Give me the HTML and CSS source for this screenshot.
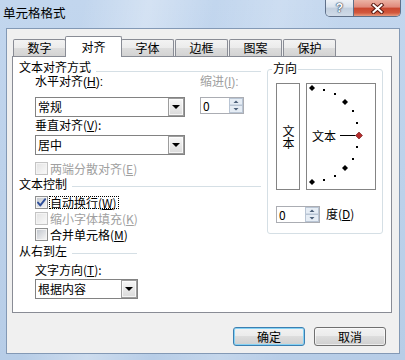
FILE: index.html
```html
<!DOCTYPE html>
<html lang="zh-CN">
<head>
<meta charset="utf-8">
<title>单元格格式</title>
<link rel="stylesheet" href="styles.css">
</head>
<body>
<div class="window">
  <div class="titlebar">
    <div class="title">单元格格式</div>
    <div class="caps">
      <div class="cap help">?</div>
      <div class="cap close">
        <svg width="15" height="11" viewBox="0 0 15 11"><path class="x-out" d="M3.5 2 L11.5 9 M11.5 2 L3.5 9"/><path class="x-in" d="M3.5 2 L11.5 9 M11.5 2 L3.5 9"/></svg>
      </div>
    </div>
  </div>
  <div class="client">
    <div class="tabs">
      <div class="tab">数字</div>
      <div class="tab active">对齐</div>
      <div class="tab">字体</div>
      <div class="tab">边框</div>
      <div class="tab">图案</div>
      <div class="tab">保护</div>
    </div>
    <div class="panel">
      <div class="left">
        <div class="gtitle tight first"><span>文本对齐方式</span><i class="rule"></i></div>
        <div class="label tight r0"><span class="lab-a">水平对齐(<u>H</u>):</span><span class="dis">缩进(<u>I</u>):</span></div>
        <div class="fieldrow r1">
          <div class="combo wide"><span class="val">常规</span><span class="drop"><i class="tri"></i></span></div>
          <div class="spin indent">
            <span class="val">0</span>
            <svg width="14" height="15" viewBox="0 0 14 15"><rect x=".5" y=".5" width="13" height="6.5" class="sb"/><rect x=".5" y="7.5" width="13" height="7" class="sb"/><path d="M4.5 5 L7 2.5 L9.5 5 Z" class="sa"/><path d="M4.5 10 L7 12.5 L9.5 10 Z" class="sa"/></svg>
          </div>
        </div>
        <div class="label r2">垂直对齐(<u>V</u>):</div>
        <div class="fieldrow r3">
          <div class="combo wide"><span class="val">居中</span><span class="drop"><i class="tri"></i></span></div>
        </div>
        <div class="check disabled r4"><span class="box"></span><span class="txt">两端分散对齐(<u>E</u>)</span></div>
        <div class="gtitle r5"><span>文本控制</span><i class="rule"></i></div>
        <div class="check r6"><span class="box checked"><svg width="11" height="11" viewBox="0 0 11 11"><path d="M2 5.6 L4.3 8.4 L9.2 2.2" class="tick"/></svg></span><span class="txt focus">自动换行(<u>W</u>)</span></div>
        <div class="check disabled r7"><span class="box"></span><span class="txt">缩小字体填充(<u>K</u>)</span></div>
        <div class="check r7"><span class="box"></span><span class="txt">合并单元格(<u>M</u>)</span></div>
        <div class="gtitle r8"><span>从右到左</span><i class="rule short"></i></div>
        <div class="label r9">文字方向(<u>T</u>):</div>
        <div class="fieldrow r10">
          <div class="combo narrow"><span class="val">根据内容</span><span class="drop"><i class="tri"></i></span></div>
        </div>
      </div>
      <div class="orient">
        <div class="otitle">方向</div>
        <div class="obody">
          <div class="vbox"><span class="vtext">文本</span></div>
          <div class="dial">
            <svg width="68" height="105" viewBox="0 0 68 105">
              <g fill="#000">
                <polygon points="5,1 8,4 5,7 2,4"/>
                <polygon points="38,15 41,18 38,21 35,18"/>
                <polygon points="38,81 41,84 38,87 35,84"/>
                <polygon points="5,95 8,98 5,101 2,98"/>
                <rect x="16" y="5" width="2" height="2"/>
                <rect x="27" y="9" width="2" height="2"/>
                <rect x="45" y="26" width="2" height="2"/>
                <rect x="49" y="38" width="2" height="2"/>
                <rect x="49" y="62" width="2" height="2"/>
                <rect x="45" y="74" width="2" height="2"/>
                <rect x="27" y="91" width="2" height="2"/>
                <rect x="16" y="95" width="2" height="2"/>
              </g>
              <line x1="33" y1="51.5" x2="48.5" y2="51.5" stroke="#000" stroke-width="1"/>
              <polygon points="52,48 55.5,51.5 52,55 48.5,51.5" fill="#b42c2c" stroke="#6a1414" stroke-width=".6"/>
              <text x="5" y="56.5" class="dtext">文本</text>
            </svg>
          </div>
        </div>
        <div class="deg">
          <div class="spin">
            <span class="val">0</span>
            <svg width="14" height="15" viewBox="0 0 14 15"><rect x=".5" y=".5" width="13" height="6.5" class="sb"/><rect x=".5" y="7.5" width="13" height="7" class="sb"/><path d="M4.5 5 L7 2.5 L9.5 5 Z" class="sa"/><path d="M4.5 10 L7 12.5 L9.5 10 Z" class="sa"/></svg>
          </div>
          <span class="unit">度(<u>D</u>)</span>
        </div>
      </div>
    </div>
    <div class="buttons">
      <button class="btn default">确定</button>
      <button class="btn">取消</button>
    </div>
  </div>
</div>
</body>
</html>
```

FILE: styles.css
```css
* { box-sizing: border-box; }
html, body { margin: 0; padding: 0; }
body {
  width: 405px;
  height: 360px;
  overflow: hidden;
  font-family: "Noto Sans CJK SC", "Liberation Sans", sans-serif;
  font-size: 12px;
  color: #000;
}
u { text-decoration: underline; text-underline-offset: 1px; }

.window {
  width: 405px;
  height: 360px;
  display: flex;
  flex-direction: column;
  background:
    linear-gradient(100deg, rgba(255,255,255,0) 18%, rgba(255,255,255,.3) 32%, rgba(255,255,255,0) 46%, rgba(255,255,255,.18) 60%, rgba(255,255,255,0) 74%),
    linear-gradient(180deg, #c2d6ee 0%, #b7cde7 100%);
}

/* title bar */
.titlebar {
  height: 28px;
  flex: none;
  display: flex;
  align-items: flex-start;
  padding: 0 4px 0 3px;
}
.title { margin-top: 6px; font-size: 12.5px; line-height: 14px; }
.caps {
  margin-left: auto;
  display: flex;
  height: 17px;
  border: 1px solid #5f7089;
  border-top: none;
  border-radius: 0 0 5px 5px;
  overflow: hidden;
}
.cap { height: 100%; display: flex; align-items: center; justify-content: center; }
.help {
  width: 28px;
  border-right: 1px solid #5f7089;
  background: linear-gradient(#eef2f7 0%, #d9e2ed 45%, #c2cfde 50%, #d0dbe8 100%);
  font-family: "Liberation Sans", sans-serif;
  font-weight: bold;
  font-size: 12px;
  line-height: 12px;
  color: #fff;
  text-shadow: 0 0 1px #33455c, 0 0 1px #33455c, 0 0 2px #33455c;
}
.close {
  width: 46px;
  background: linear-gradient(#ebb3a5 0%, #e0897a 45%, #c9472f 50%, #d2583d 80%, #e79c80 100%);
}
.close svg { display: block; }
.x-out { fill: none; stroke: #5a1a12; stroke-width: 4; stroke-linecap: square; }
.x-in { fill: none; stroke: #fff; stroke-width: 2; stroke-linecap: square; }

/* client */
.client {
  flex: 1;
  margin: 0 5px 6px 6px;
  background: #f0f0f0;
  border: 1px solid #8399b5;
  display: flex;
  flex-direction: column;
}
.tabs {
  flex: none;
  display: flex;
  align-items: flex-end;
  height: 20px;
  margin-top: 7px;
  padding-left: 6px;
}
.tab {
  width: 53px;
  height: 17px;
  margin-right: 1px;
  border: 1px solid #898c95;
  border-bottom: none;
  border-radius: 2px 2px 0 0;
  background: linear-gradient(#f3f3f3 0%, #ebebeb 50%, #dddddd 50%, #d3d3d3 100%);
  text-align: center;
  line-height: 16px;
}
.tab.active {
  width: 57px;
  height: 21px;
  margin: 0 -1px -1px -2px;
  padding-top: 2px;
  background: #fff;
  position: relative;
  z-index: 1;
}

.panel {
  flex: none;
  width: 380px;
  height: 257px;
  margin-left: 5px;
  border: 1px solid #898c95;
  background: #fff;
  display: flex;
}
.left {
  flex: none;
  width: 254px;
  padding: 5px 6px 0;
  display: flex;
  flex-direction: column;
}
.gtitle { display: flex; height: 12px; line-height: 12px; white-space: nowrap; }
.gtitle .rule { flex: 1; height: 1px; background: #d5dfe5; margin: 8px 0 0 5px; }
.gtitle.first .rule { margin-top: 9px; }
.gtitle .rule.short { flex: none; width: 65px; }
.label { display: flex; height: 12px; line-height: 12px; padding-left: 16px; white-space: nowrap; }
.tight { font-family: "Liberation Sans", "Noto Sans CJK SC", sans-serif; }
.lab-a { width: 165px; }
.dis { color: #a0a0a0; }

.fieldrow { display: flex; align-items: flex-start; padding-left: 16px; }
.r0 { margin-top: 2px; }
.r1 { margin-top: 9px; }
.r2 { margin-top: 2px; }
.r3 { margin-top: 4px; }
.r4 { margin-top: 7px; }
.r5 { margin-top: 3px; }
.r6 { margin-top: 6px; }
.r7 { margin-top: 3px; }
.r8 { margin-top: 4px; }
.r9 { margin-top: 7px; }
.r10 { margin-top: 3px; }

.combo { height: 20px; border: 1px solid #828282; background: #fff; display: flex; }
.combo.wide { width: 150px; }
.combo.narrow { width: 103px; }
.combo .val { flex: 1; line-height: 18px; padding-left: 2px; white-space: nowrap; }
.drop {
  width: 16px;
  border: 1px solid #9d9d9d;
  background: linear-gradient(#f7f7f7, #dadada);
  box-shadow: inset 0 0 0 1px rgba(255,255,255,.7);
  display: flex;
  align-items: center;
  justify-content: center;
}
.tri {
  width: 0;
  height: 0;
  border-left: 4px solid transparent;
  border-right: 4px solid transparent;
  border-top: 4px solid #000;
  margin-top: -1px;
}

.spin { width: 44px; height: 17px; border: 1px solid #abadb3; background: #fff; display: flex; flex: none; }
.spin.indent { margin-left: 15px; }
.spin .val { flex: 1; line-height: 15px; padding-left: 2px; }
.spin svg { display: block; }
.sb { fill: #e6edf5; stroke: #b9c5d4; stroke-width: 1; }
.sa { fill: #4d6079; }

.check { display: flex; align-items: center; height: 13px; padding-left: 16px; white-space: nowrap; }
.box {
  flex: none;
  width: 13px;
  height: 13px;
  border: 1px solid #8e8f8f;
  padding: 1px;
  background: #f4f4f4;
  position: relative;
}
.box::before {
  content: "";
  display: block;
  width: 100%;
  height: 100%;
  background: linear-gradient(135deg, #c3c8cf, #f4f4f4);
}
.box svg { position: absolute; left: 0; top: 0; }
.tick { fill: none; stroke: #2f4f9a; stroke-width: 1.9; stroke-linecap: round; stroke-linejoin: round; }
.check .txt { margin-left: 2px; line-height: 13px; }
.check .txt.focus { margin-left: 1px; border: 1px dotted #000; line-height: 11px; padding-right: 1px; }
.check.disabled { color: #a0a0a0; }
.check.disabled .box { border-color: #c4c4c4; }
.check.disabled .box::before { background: linear-gradient(135deg, #e4e4e4, #f8f8f8); }

/* orientation */
.orient {
  flex: none;
  align-self: flex-start;
  width: 116px;
  margin-top: 12px;
  border: 1px solid #d5dfe5;
  border-radius: 3px;
  padding: 0 6px 10px 8px;
}
.otitle {
  margin: -8px 0 0 -4px;
  padding: 0 1px;
  width: max-content;
  height: 12px;
  line-height: 12px;
  background: #fff;
}
.obody { display: flex; gap: 6px; margin-top: 9px; }
.vbox {
  width: 24px;
  height: 107px;
  border: 1px solid #848484;
  display: flex;
  align-items: center;
  justify-content: center;
}
.vtext { writing-mode: vertical-rl; line-height: 12px; }
.dial { width: 70px; height: 107px; border: 1px solid #848484; }
.dial svg { display: block; }
.dtext { font-family: "Noto Sans CJK SC", sans-serif; font-size: 12px; fill: #000; }
.deg { display: flex; align-items: center; margin-top: 16px; }
.unit { margin-left: 6px; line-height: 12px; margin-top: -1px; }

/* buttons */
.buttons {
  flex: none;
  display: flex;
  justify-content: flex-end;
  gap: 9px;
  margin-top: 14px;
  padding-right: 13px;
}
.btn {
  width: 72px;
  height: 19px;
  padding: 0;
  border: 1px solid #707070;
  border-radius: 3px;
  font-family: "Noto Sans CJK SC", sans-serif;
  font-size: 12px;
  line-height: 17px;
  color: #000;
  background: linear-gradient(#f2f2f2 0%, #ebebeb 50%, #dddddd 50%, #cfcfcf 100%);
  box-shadow: inset 0 0 0 1px rgba(255,255,255,.6);
}
.btn.default { border-color: #3c7fb1; box-shadow: inset 0 0 0 1px #86d2f4; }
```
